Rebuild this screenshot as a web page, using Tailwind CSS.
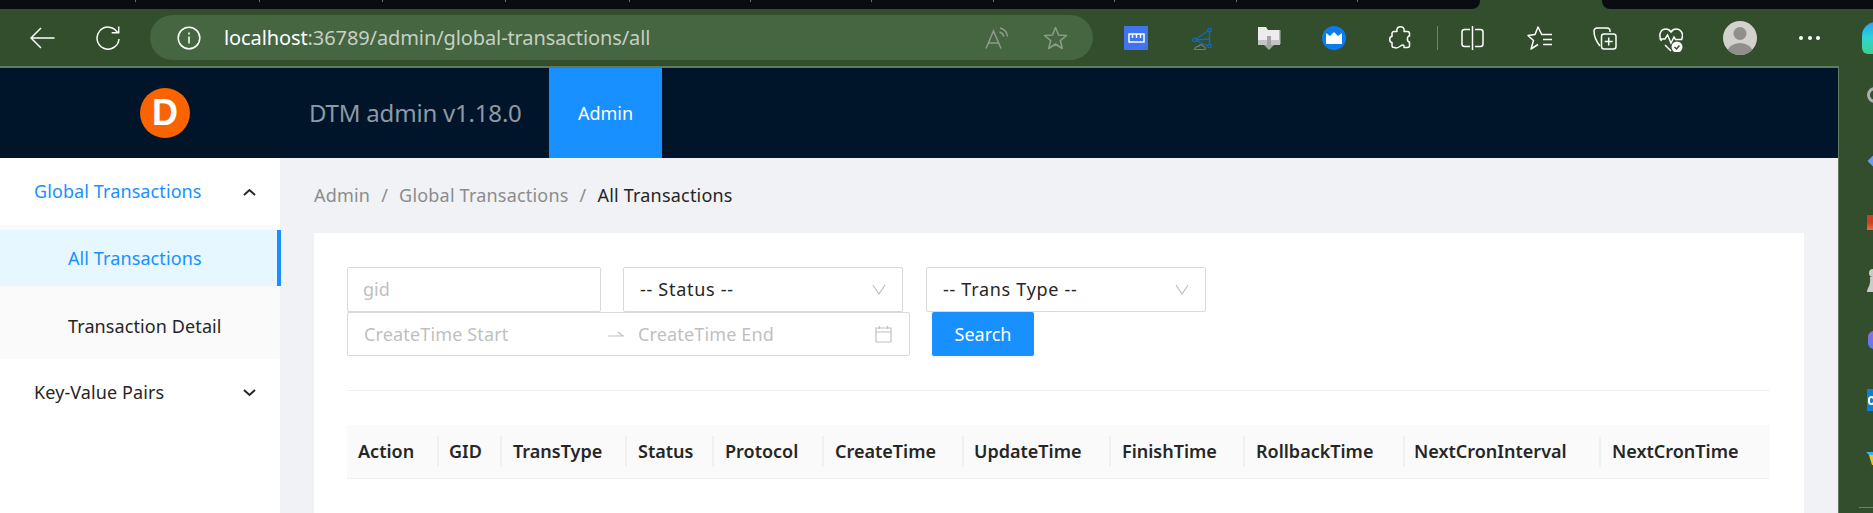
<!DOCTYPE html>
<html>
  <head>
    <meta charset="UTF-8" />
    <title>DTM admin</title>
    <script src="https://cdn.jsdelivr.net/npm/@tailwindcss/browser@4"></script>
  </head>
  <body class="bg-white">
    <div class="w-[1873px] h-[513px] overflow-hidden flex flex-col bg-[#324e2d] font-['Noto_Sans','Open_Sans',sans-serif] text-[#262626]">
      <!-- window tab strip -->
      <div class="flex h-[9px] shrink-0">
        <div class="w-[1480px] bg-[#090d10] rounded-br-lg flex items-start">
          <div class="w-[136px] h-[2px] border-r border-gray-500"></div>
          <div class="w-[124px] h-[2px] border-r border-gray-500"></div>
          <div class="w-[123px] h-[2px] border-r border-gray-500"></div>
          <div class="w-[123px] h-[2px] border-r border-gray-500"></div>
          <div class="w-[124px] h-[2px] border-r border-gray-500"></div>
          <div class="w-[121px] h-[2px] border-r border-gray-500"></div>
          <div class="w-[121px] h-[2px] border-r border-gray-500"></div>
          <div class="w-[122px] h-[2px] border-r border-gray-500"></div>
          <div class="w-[121px] h-[2px] border-r border-gray-500"></div>
          <div class="w-[122px] h-[2px] border-r border-gray-500"></div>
          <div class="w-[121px] h-[2px] border-r border-gray-500"></div>
        </div>
        <div class="w-[122px]"></div>
        <div class="flex-1 bg-[#090d10] rounded-bl-lg"></div>
      </div>

      <!-- browser toolbar -->
      <div class="h-[57px] shrink-0 flex items-center pl-[30px] text-white">
        <svg class="w-[25px] h-[22px] shrink-0" viewBox="0 0 25 22" fill="none" stroke="white" stroke-width="1.5"><path d="M24.500 11H1.500M11 1 1 11l10 10" /></svg>
        <svg class="w-[24px] h-[24px] shrink-0 ml-[41px]" viewBox="0 0 24 24" fill="none" stroke="white" stroke-width="1.5"><path d="M21.500 6.500A11 11 0 1 0 23 13" /><path d="M22.700 .5v6.300h-7" /></svg>
        <div class="w-[943px] h-[45px] ml-[30px] shrink-0 rounded-full bg-[#456641] flex items-center pl-[27px]">
          <svg class="w-[24px] h-[24px] shrink-0" viewBox="0 0 24 24" fill="none" stroke="white" stroke-width="1.5"><circle cx="12" cy="12" r="10.800" /><path d="M12 10.500v7M12 6.500v2" /></svg>
          <div class="ml-[23px] text-[20px] tracking-[-0.1px] text-[#c6d0c4] whitespace-nowrap"><span class="text-white">localhost</span>:36789/admin/global-transactions/all</div>
          <svg class="w-[24px] h-[22px] shrink-0 ml-auto" viewBox="0 0 24 22" fill="none" stroke="#8f9a8c" stroke-width="1.500"><path d="M1 21.500 8.500 4 16 21.500M3.500 16h10" /><path d="M15 1c4 1 7 4 7.500 8.500M14.500 5c2.500.7 3.800 2.200 4.300 4.500" /></svg>
          <svg class="w-[25px] h-[24px] shrink-0 ml-[34px] mr-[25px]" viewBox="0 0 24 24" fill="none" stroke="#8f9a8c" stroke-width="1.500" stroke-linejoin="round"><path d="m12 1.500 3 7.500 8 .5-6.200 5.100 2 7.900L12 18l-6.800 4.500 2-7.900L1 9.500 9 9z" /></svg>
        </div>
        <div class="w-[24px] h-[24px] ml-[31px] shrink-0 bg-[#3f73f0] flex items-center justify-center">
          <svg class="w-[17px] h-[10px]" viewBox="0 0 17 10" fill="none" stroke="white" stroke-width="1.500"><path d="M1 1h15v8H1zM4.500 1v4M8.500 1v4M12.500 1v4" /></svg>
        </div>
        <svg class="w-[22px] h-[24px] ml-[44px] shrink-0" viewBox="0 0 22 24" fill="none" stroke="#0f6cbd" stroke-width="1.300"><path d="M3.500 13.500 16.500 4.500M3.500 14.500l13 5.500M17.500 5.500v13M4 14l13-1" /><circle cx="17.500" cy="4" r="1.800" /><circle cx="2.500" cy="14" r="1.800" /><circle cx="17.500" cy="20" r="1.800" /><path d="M3 23.500h9c2 0 2-3-.5-3-1-2.500-4-2.500-5 0-2.500-.5-5 3-3.500 3z" stroke="#7a7a7a" stroke-width="1.200" /></svg>
        <svg class="w-[24px] h-[24px] ml-[43px] shrink-0 mt-[3px]" viewBox="0 0 24 24"><path d="M1 0h8l2 3h11v14H1z" fill="#ececec" /><path d="M22 3h1.500v14H22z" fill="#b5b5b5" /><path d="M1 13h22v5H1z" fill="#c4c4c4" /><path d="M10 9h4v9h3l-5 5-5-5h3z" fill="#a3a3a3" /></svg>
        <div class="w-[24px] h-[24px] ml-[41px] shrink-0 rounded-full bg-[#0a7cf0] flex items-center justify-center">
          <svg class="w-[16px] h-[12px]" viewBox="0 0 16 12" fill="white"><path d="M0 1l4 3 4-4 4 4 4-3v11H0z" /></svg>
        </div>
        <svg class="w-[23px] h-[24px] ml-[43px] shrink-0" viewBox="0 0 23 24" fill="none" stroke="white" stroke-width="1.500" stroke-linejoin="round"><path d="M8 5.500C7 1.500 10 .8 11.500.8S16 1.500 15 5.500h3.500a2 2 0 0 1 2 2V10c-3 0-2.500 6 0 6v3.500a2 2 0 0 1-2 2H15c.5-3-1.500-3-3.500-1.500S7.500 23 6 21.500H5a2 2 0 0 1-2-2v-3c-3 0-3-6 0-6V7.500a2 2 0 0 1 2-2z" /></svg>
        <div class="w-px h-[24px] ml-[25px] shrink-0 bg-[#6e8469]"></div>
        <svg class="w-[24px] h-[24px] ml-[23px] shrink-0" viewBox="0 0 24 24" fill="none" stroke="white" stroke-width="1.500"><path d="M9 3.500H3.500a2.500 2.500 0 0 0-2.500 2.500v12a2.500 2.500 0 0 0 2.500 2.500H9M14 3.500h5.500a2.500 2.500 0 0 1 2.500 2.500v12a2.500 2.500 0 0 1-2.500 2.500H14M11.500 0v24" /></svg>
        <svg class="w-[25px] h-[24px] ml-[42px] shrink-0" viewBox="0 0 25 24" fill="none" stroke="white" stroke-width="1.500" stroke-linejoin="round"><path d="M14.500 8 11 1 8 8.500 1 9.500l5.500 5L4 23l7-4.500" /><path d="M14 8.500h11M16 13.500h9M16 18.500h9" /></svg>
        <svg class="w-[24px] h-[24px] ml-[41px] shrink-0" viewBox="0 0 24 24" fill="none" stroke="white" stroke-width="1.500"><path d="M17 6V5a3 3 0 0 0-3-3H4a3 3 0 0 0-3 3c0 4 2 10 6 15" /><rect x="8.500" y="8" width="14.500" height="15" rx="2.500" /><path d="M15.700 11.500v8M11.700 15.500h8" /></svg>
        <svg class="w-[24px] h-[24px] ml-[42px] mt-[4px] shrink-0" viewBox="0 0 24 24" fill="none" stroke="white" stroke-width="1.500"><path d="M2.500 13C-1 7 1.500 1 7 1c3 0 4 1.500 5 3 1-1.500 2-3 5-3 5.500 0 8 5.500 5.500 10.500M.5 11H6l2.500-4 3.500 8 3-6 1.500 2.500H23.500M6 17l6 6" /><circle cx="18" cy="19" r="5.500" fill="white" stroke="none" /><path d="m15.500 19 2 2 3-3.500" stroke="#324e2d" /></svg>
        <div class="w-[34px] h-[34px] ml-[40px] shrink-0 rounded-full bg-[#d2d1ce] overflow-hidden">
          <svg class="w-[34px] h-[34px]" viewBox="0 0 34 34" fill="#918f8b"><circle cx="17" cy="12.500" r="6.500" /><ellipse cx="17" cy="31" rx="12.500" ry="9" /></svg>
        </div>
        <div class="w-[21px] ml-[42px] shrink-0 flex justify-between">
          <div class="w-[4px] h-[4px] rounded-full bg-white"></div>
          <div class="w-[4px] h-[4px] rounded-full bg-white"></div>
          <div class="w-[4px] h-[4px] rounded-full bg-white"></div>
        </div>
        <div class="w-[24px] h-[32px] ml-[42px] shrink-0 rounded-tl-[14px] rounded-bl-[6px] bg-gradient-to-b from-[#2f9df0] via-[#2fd6d0] to-[#3ed08a]"></div>
      </div>
      <div class="flex-1 flex min-h-0">
        <!-- page -->
        <div class="w-[1839px] shrink-0 flex flex-col bg-[#f0f2f5] border-t-2 border-r border-[#5f7a5c]">
          <header class="h-[90px] shrink-0 bg-[#001529] flex items-center">
            <div class="w-[280px] h-full shrink-0 pl-[140px] flex items-center">
              <div class="w-[50px] h-[50px] rounded-full bg-[#f96400] flex items-center justify-center text-white font-bold text-[36px] leading-none font-['Liberation_Sans',sans-serif]">D</div>
            </div>
            <div class="ml-[29px] w-[240px] text-[24px] tracking-[-0.2px] text-[#8d99a6] whitespace-nowrap">DTM admin v1.18.0</div>
            <div class="w-[113px] h-full bg-[#1890ff] text-white text-[18px] flex items-center justify-center">Admin</div>
          </header>
          <div class="flex-1 flex min-h-0">
            <aside class="w-[280px] shrink-0 bg-white text-[18px] tracking-[0.1px]">
              <div class="h-[67px] pl-[34px] pr-[24px] flex items-center justify-between text-[#1890ff]">
                <span>Global Transactions</span>
                <svg class="w-[13px] h-[8px]" viewBox="0 0 13 8" fill="none" stroke="#262626" stroke-width="2"><path d="m1 7 5.500-5 5.500 5" /></svg>
              </div>
              <div class="bg-[#fafafa] pt-[5px]">
                <div class="h-[56px] w-[281px] pl-[68px] flex items-center bg-[#e6f7ff] text-[#1890ff] border-r-4 border-[#1890ff]">All Transactions</div>
                <div class="h-[73px] pl-[68px] pt-[7px] flex items-center">Transaction Detail</div>
              </div>
              <div class="h-[67px] pl-[34px] pr-[24px] flex items-center justify-between">
                <span>Key-Value Pairs</span>
                <svg class="w-[13px] h-[8px]" viewBox="0 0 13 8" fill="none" stroke="#262626" stroke-width="2"><path d="m1 1 5.500 5 5.500-5" /></svg>
              </div>
            </aside>
            <main class="flex-1 min-w-0 px-[34px] overflow-hidden">
              <div class="h-[75px] flex items-center text-[18px] tracking-[0.2px] text-[#8c8c8c] whitespace-nowrap">
                <span>Admin</span><span class="mx-[11px]">/</span><span>Global Transactions</span><span class="mx-[11px]">/</span><span class="text-[#262626]">All Transactions</span>
              </div>
              <section class="h-[400px] bg-white pt-[34px] pl-[33px] pr-[34px] text-[18px]">
                <div class="flex">
                  <div class="w-[254px] h-[45px] border border-[#d9d9d9] rounded-[2px] pl-[15px] flex items-center text-[#bfbfbf]">gid</div>
                  <div class="w-[280px] h-[45px] ml-[22px] border border-[#d9d9d9] rounded-[2px] pl-[16px] pr-[16px] flex items-center justify-between">
                    <span class="tracking-[0.7px]">-- Status --</span>
                    <svg class="w-[14px] h-[11px]" viewBox="0 0 14 11" fill="none" stroke="#bfbfbf" stroke-width="1.200"><path d="m1 1 6 9 6-9" /></svg>
                  </div>
                  <div class="w-[280px] h-[45px] ml-[23px] border border-[#d9d9d9] rounded-[2px] pl-[16px] pr-[16px] flex items-center justify-between">
                    <span class="tracking-[0.7px]">-- Trans Type --</span>
                    <svg class="w-[14px] h-[11px]" viewBox="0 0 14 11" fill="none" stroke="#bfbfbf" stroke-width="1.200"><path d="m1 1 6 9 6-9" /></svg>
                  </div>
                </div>
                <div class="flex">
                  <div class="w-[563px] h-[44px] border border-[#d9d9d9] rounded-[2px] pl-[16px] pr-[17px] flex items-center text-[#bfbfbf] tracking-[0.15px]">
                    <span class="w-[244px]">CreateTime Start</span>
                    <svg class="w-[16px] h-[6px] shrink-0" viewBox="0 0 16 6" fill="none" stroke="#bfbfbf" stroke-width="1.200"><path d="M0 5h16M10 1l5 4" /></svg>
                    <span class="ml-[14px]">CreateTime End</span>
                    <svg class="w-[17px] h-[18px] ml-auto shrink-0" viewBox="0 0 17 18" fill="none" stroke="#bfbfbf" stroke-width="1.200"><path d="M1 3h15v14H1zM1 7h15M4.500 1v3M12.500 1v3" /></svg>
                  </div>
                  <div class="w-[102px] h-[44px] ml-[22px] bg-[#1890ff] rounded-[2px] text-white flex items-center justify-center shadow-[0_2px_0_rgba(0,0,0,0.04)]">Search</div>
                </div>
                <div class="h-px mt-[34px] bg-[#f0f0f0]"></div>
                <table class="mt-[34px] table-fixed w-[1423px] border-collapse">
                  <thead>
                    <tr class="h-[53px] bg-[#fafafa] border-b border-[#f0f0f0] text-left">
                      <th class="w-[90px] font-semibold"><div class="pl-[11px]">Action</div></th>
                      <th class="w-[63px] font-semibold"><div class="h-[31px] pl-[10px] flex items-center border-l-2 border-[#f0f0f0]">GID</div></th>
                      <th class="w-[125px] font-semibold"><div class="h-[31px] pl-[11px] flex items-center border-l-2 border-[#f0f0f0]">TransType</div></th>
                      <th class="w-[87px] font-semibold"><div class="h-[31px] pl-[11px] flex items-center border-l-2 border-[#f0f0f0]">Status</div></th>
                      <th class="w-[110px] font-semibold"><div class="h-[31px] pl-[11px] flex items-center border-l-2 border-[#f0f0f0]">Protocol</div></th>
                      <th class="w-[140px] font-semibold"><div class="h-[31px] pl-[11px] flex items-center border-l-2 border-[#f0f0f0]">CreateTime</div></th>
                      <th class="w-[147px] font-semibold"><div class="h-[31px] pl-[10px] flex items-center border-l-2 border-[#f0f0f0]">UpdateTime</div></th>
                      <th class="w-[134px] font-semibold"><div class="h-[31px] pl-[11px] flex items-center border-l-2 border-[#f0f0f0]">FinishTime</div></th>
                      <th class="w-[160px] font-semibold"><div class="h-[31px] pl-[11px] flex items-center border-l-2 border-[#f0f0f0]">RollbackTime</div></th>
                      <th class="w-[196px] font-semibold"><div class="h-[31px] pl-[9px] flex items-center border-l-2 border-[#f0f0f0]">NextCronInterval</div></th>
                      <th class="w-[171px] font-semibold"><div class="h-[31px] pl-[11px] flex items-center border-l-2 border-[#f0f0f0]">NextCronTime</div></th>
                    </tr>
                  </thead>
                </table>
              </section>
            </main>
          </div>
        </div>
        <!-- edge bar, clipped by the window -->
        <div class="flex-1 min-w-0 overflow-hidden pl-[28px] pt-[21px]">
          <div class="w-[16px] h-[16px] rounded-full border-[3px] border-[#a9b0ad]"></div>
          <div class="w-[12px] h-[12px] mt-[52px] ml-[3px] rotate-45 bg-[#6a9cf5]"></div>
          <div class="w-[12px] h-[15px] mt-[48px] bg-gradient-to-b from-[#c8421c] via-[#c8421c] to-[#ee6b45]"></div>
          <svg class="w-[12px] h-[24px] mt-[38px]" viewBox="0 0 12 24" fill="#c9cbc8"><circle cx="6" cy="5" r="4" /><path d="M3 9h3v15H0c0-4 4-6 3-15z" /></svg>
          <div class="w-[12px] h-[18px] mt-[39px] ml-[1px] rounded-l-md bg-gradient-to-b from-[#8a6fe0] to-[#5a7af0]"></div>
          <div class="w-[12px] h-[22px] mt-[40px] bg-[#0d7ed4] flex items-center">
            <div class="w-[7px] h-[9px] ml-[1px] rounded-full border-2 border-white"></div>
          </div>
          <svg class="w-[12px] h-[13px] mt-[41px] -ml-[1px]" viewBox="0 0 12 13"><path d="M0 0h12v3H3z" fill="#35b6f2" /><path d="M3 3h9v10H6z" fill="#eec32c" /></svg>
          <div class="w-[14px] h-px mt-[42px] -ml-[8px] bg-[#6d8268]"></div>
        </div>
      </div>
    </div>
  </body>
</html>
